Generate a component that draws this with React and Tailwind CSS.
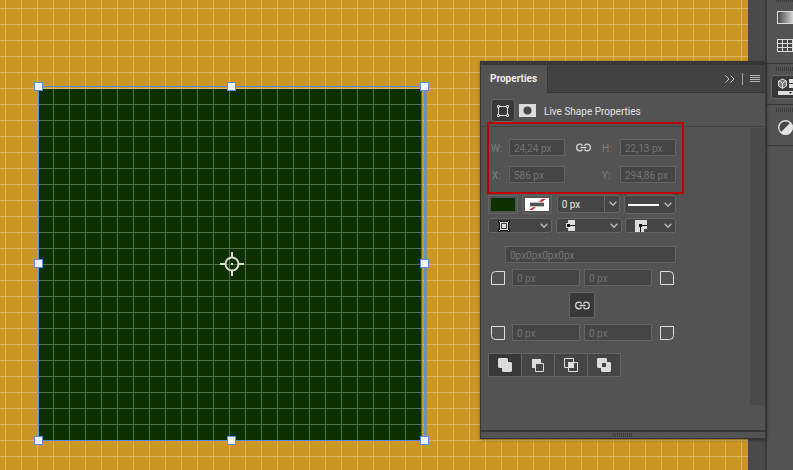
import { useState } from 'react';
import clsx from 'clsx';

function Artboard() {
  const handles = [
    [34, 82], [227, 82], [420, 82],
    [34, 259], [420, 259],
    [34, 436], [227, 436], [420, 436],
  ];

  return (
    <svg className="block w-full h-full" shapeRendering="crispEdges" aria-label="Canvas">
      <defs>
        <pattern id="grid" x="5" y="8" width="16" height="16" patternUnits="userSpaceOnUse">
          <path d="M0 0H16V1H1V16H0Z" fill="#fff" fillOpacity="0.3" />
        </pattern>
      </defs>
      <rect width="100%" height="100%" fill="#cb9722" />
      <rect x="39" y="89" width="383" height="351" fill="#0c3000" />
      <rect width="100%" height="100%" fill="url(#grid)" />

      {/* Selection outline */}
      <g fill="#588ee6">
        <rect x="38" y="86" width="388" height="1" />
        <rect x="38" y="86" width="1" height="355" />
        <rect x="37" y="86" width="1" height="355" fillOpacity="0.6" />
        <rect x="424" y="86" width="2" height="355" />
        <rect x="38" y="440" width="388" height="1" />
      </g>
      <rect x="426" y="91" width="1" height="345" fill="#8f9069" />
      {handles.map(([x, y]) => (
        <rect key={`${x}-${y}`} x={x + 0.5} y={y + 0.5} width="8" height="8" fill="#f5f5f5" stroke="#588ee6" />
      ))}

      {/* Transform origin */}
      <g stroke="#d9ddd5" strokeWidth="2" fill="none" shapeRendering="auto">
        <circle cx="232" cy="264" r="6.5" />
        <path d="M232 252v5M232 271v5M220 264h5M239 264h5" />
        <path d="M231 264h2" />
      </g>
    </svg>
  );
}

function LinkIcon() {
  return (
    <svg width="15" height="9" viewBox="0 0 15 9" fill="none" stroke="#d8d8d8" strokeWidth="1.3">
      <path d="M6.5 2.6A2.6 2.6 0 0 0 4.2 1.2H4a3.3 3.3 0 0 0 0 6.6h.2a2.6 2.6 0 0 0 2.3-1.4M8.5 2.6a2.6 2.6 0 0 1 2.3-1.4h.2a3.3 3.3 0 0 1 0 6.6h-.2a2.6 2.6 0 0 1-2.3-1.4M4.5 4.5h6" />
    </svg>
  );
}

function Chevron() {
  return (
    <svg width="8" height="6" viewBox="0 0 8 6" fill="none" stroke="#bdbdbd" strokeWidth="1.3">
      <path d="M.7 .8L4 4.3L7.3 .8" />
    </svg>
  );
}

function CornerIcon({ d }) {
  return (
    <svg width="14" height="14" viewBox="0 0 14 14" fill="none" stroke="#dcdcdc" className="shrink-0">
      <path d={d} />
    </svg>
  );
}

function Field({ id, label, value, className }) {
  return (
    <input
      id={id}
      aria-label={label}
      defaultValue={value}
      className={clsx('h-[17px] min-w-0 w-full px-1 pt-px bg-[#454545] border border-[#636363] text-[#747474] outline-none', className)}
    />
  );
}

// Select with its drawing and arrow laid over the native control
function IconSelect({ label, options, icon, className }) {
  return (
    <div className={clsx('relative', className)}>
      <select
        aria-label={label}
        className="block appearance-none w-full h-full bg-[#454545] border border-[#656565] rounded-[3px] text-transparent outline-none"
      >
        {options.map((o) => <option key={o} value={o} />)}
      </select>
      <div className="absolute inset-0 flex items-center justify-between pr-1 pointer-events-none">
        {icon}
        <Chevron />
      </div>
    </div>
  );
}

function RadiusRow({ left, right, labels }) {
  return (
    <div className="flex items-center pl-[3px] pr-[2px]">
      <CornerIcon d={left} />
      <div className="flex-1 flex gap-1 ml-[7px] mr-2">
        <Field label={labels[0]} value="0 px" />
        <Field label={labels[1]} value="0 px" />
      </div>
      <CornerIcon d={right} />
    </div>
  );
}

const pathOps = [
  {
    name: 'Combine shapes',
    icon: <path d="M0 1L1 0H9L10 1V4H13L14 5V13L13 14H5L4 13V10H1L0 9Z" fill="#dcdcdc" />,
  },
  {
    name: 'Subtract front shape',
    icon: <><path d="M1 1H10V5H5V10H1Z" fill="#dcdcdc" /><path d="M4.5 5.5H12.5V13.5H4.5Z" fill="#454545" stroke="#dcdcdc" /></>,
  },
  {
    name: 'Intersect shape areas',
    icon: <><path d="M.5 .5H9.5V9.5H.5ZM4.5 4.5H13.5V13.5H4.5Z" stroke="#dcdcdc" /><path d="M4 4H10V10H4Z" fill="#dcdcdc" /></>,
  },
  {
    name: 'Exclude overlapping shapes',
    icon: <path fillRule="evenodd" d="M0 1L1 0H9L10 1V4H13L14 5V13L13 14H5L4 13V10H1L0 9ZM5 5V9H9V5Z" fill="#dcdcdc" />,
  },
];

function PropertiesPanel() {
  const [linked, setLinked] = useState(true);
  const [op, setOp] = useState(0);

  return (
    <section className="absolute top-[61px] right-[26px] w-[287px] border-t-4 border-l border-r-2 border-b border-[#363636] bg-[#535353] shadow-[0_1px_3px_rgba(0,0,0,0.4)]">
      {/* Tab bar */}
      <div className="flex h-7 bg-[#424242]">
        <button className="w-[67px] pl-[9px] pb-[2px] text-left font-bold text-[#ececec] bg-[#535353] border-r border-[#383838]">
          Properties
        </button>
        <div className="flex-1 flex items-center justify-end gap-[7px] pr-[5px] border-b border-[#383838]">
          <button aria-label="Collapse panel">
            <svg width="10" height="8" viewBox="0 0 10 8" fill="none" stroke="#c4c4c4">
              <path d="M.5 .5L4 4L.5 7.5M5.5 .5L9 4L5.5 7.5" />
            </svg>
          </button>
          <span className="w-px h-3 bg-[#a8a8a8]" />
          <button aria-label="Panel menu">
            <svg width="10" height="8" fill="#b5b5b5" shapeRendering="crispEdges">
              <path d="M0 0h10v1H0zM0 2h10v1H0zM0 4h10v1H0zM0 6h10v1H0z" />
            </svg>
          </button>
        </div>
      </div>

      <div className="flex items-center h-[34px] pt-[2px] pl-[10px] border-b border-[#404040]">
        <button aria-label="Live shape" className="flex items-center justify-center w-6 h-[23px] rounded-[3px] bg-[#383838] border border-[#656565]">
          <svg width="12" height="12" viewBox="0 0 12 12" fill="none" stroke="#dcdcdc" className="shrink-0">
            <path d="M1.5 3V9M10.5 3V9M3 1.5H9M3 10.5H9" />
            <path d="M.5 .5h2v2h-2zM9.5 .5h2v2h-2zM.5 9.5h2v2h-2zM9.5 9.5h2v2h-2z" fill="#383838" />
          </svg>
        </button>
        <button aria-label="Mask" className="ml-1">
          <svg width="17" height="13">
            <rect width="17" height="13" fill="#dcdcdc" />
            <circle cx="8.5" cy="6.5" r="4" fill="#484848" />
          </svg>
        </button>
        <h2 className="ml-2 pt-[2px] text-[#e2e2e2]">Live Shape Properties</h2>
      </div>

      <div className="flex h-[303px]">
        <div className="flex-1 pt-3 pl-[7px] pr-[74px]">
          <div className="grid grid-cols-[21px_56px_1fr_18px_56px] gap-y-[10px] items-center text-[#7e7e7e]">
            <label htmlFor="w" className="pl-[3px] pt-px">W:</label>
            <Field id="w" value="24,24 px" />
            <button aria-label="Link width and height" className="justify-self-center"><LinkIcon /></button>
            <label htmlFor="h" className="pt-px">H:</label>
            <Field id="h" value="22,13 px" />
            <label htmlFor="x" className="pl-1 pt-px">X:</label>
            <Field id="x" value="586 px" />
            <span />
            <label htmlFor="y" className="pt-px">Y:</label>
            <Field id="y" value="294,86 px" />
          </div>

          <div className="flex justify-between mt-3 h-[19px]">
            <button aria-label="Fill" className="w-[30px] p-[2px] border border-[#656565]">
              <span className="block h-full bg-[#0c3000]" />
            </button>
            <button aria-label="Stroke" className="w-[30px] p-[2px] border border-[#656565]">
              <svg width="24" height="14" viewBox="0 0 24 14" preserveAspectRatio="none" className="block w-full h-full">
                <rect width="24" height="14" fill="#fff" />
                <path d="M14 4L17 1H21L17 4ZM4 13L8 10H11L7 13Z" fill="#d8201c" />
                <rect x="5" y="5" width="14" height="4" fill="#535353" />
              </svg>
            </button>
            <div className="relative w-[63px] h-[18px]">
              <select aria-label="Stroke width" className="block appearance-none w-full h-full px-1 text-[#e8e8e8] bg-[#454545] border border-[#656565] rounded-[3px] outline-none">
                <option>0 px</option>
              </select>
              <div className="absolute inset-y-0 right-0 flex items-center w-4 pl-1 border-l border-[#656565] pointer-events-none">
                <Chevron />
              </div>
            </div>
            <IconSelect
              label="Stroke type"
              options={['solid', 'dashed', 'dotted']}
              className="w-[52px]"
              icon={<span className="ml-1 w-[31px] h-[2px] bg-white" />}
            />
          </div>

          <div className="flex justify-between mt-1 h-[15px]">
            <IconSelect
              label="Stroke alignment"
              options={['inside', 'center', 'outside']}
              className="w-16"
              icon={
                <svg width="12" height="12" viewBox="0 0 12 12" className="ml-[10px]">
                  <rect x="1.5" y="1.5" width="9" height="9" fill="#dcdcdc" stroke="#111" />
                  <rect x="2" y="2" width="8" height="8" fill="#dcdcdc" />
                  <rect x="3" y="3" width="6" height="6" rx="1" fill="#303030" />
                  <rect x="4" y="4" width="4" height="4" fill="#dcdcdc" />
                  <path d="M0 0h3v2H2v1H0zM9 0h3v3h-2V2H9zM0 9h2v1h1v2H0zM10 9h2v3H9v-2h1z" fill="#111" />
                  <path d="M1 1h1v1H1zM10 1h1v1h-1zM1 10h1v1H1zM10 10h1v1h-1z" fill="#fff" />
                </svg>
              }
            />
            <IconSelect
              label="Stroke caps"
              options={['butt', 'round', 'square']}
              className="w-[66px]"
              icon={
                <svg width="10" height="11" viewBox="0 0 10 11" className="ml-[10px]">
                  <path d="M2 0H9V11H2V8H0V3H2Z" fill="#dcdcdc" />
                  <path d="M1 4H4V5H9V6H4V7H1Z" fill="#111" />
                </svg>
              }
            />
            <IconSelect
              label="Stroke corners"
              options={['miter', 'round', 'bevel']}
              className="w-[51px]"
              icon={
                <svg width="12" height="12" viewBox="0 0 12 12" className="ml-[10px]">
                  <path d="M0 0H12V9H9V12H0Z" fill="#dcdcdc" />
                  <path d="M4 4H7V5H12V6H7V7H6V12H5V7H4Z" fill="#111" />
                </svg>
              }
            />
          </div>

          <div className="mt-[13px] pl-[17px] flex">
            <Field label="Corner radii" value="0px0px0px0px" />
          </div>

          <div className="flex flex-col gap-[6px] mt-[6px]">
            <RadiusRow
              left="M.5 13.5V4.5Q.5 .5 4.5 .5H13.5V13.5Z"
              right="M.5 13.5V.5H9.5Q13.5 .5 13.5 4.5V13.5Z"
              labels={['Top left radius', 'Top right radius']}
            />
            <button
              aria-label="Link radii"
              aria-pressed={linked}
              onClick={() => setLinked(!linked)}
              className={clsx('self-center flex items-center justify-center w-[26px] h-[26px] rounded-[2px] border border-[#656565]', linked ? 'bg-[#383838]' : 'bg-[#454545]')}
            >
              <LinkIcon />
            </button>
            <RadiusRow
              left="M.5 .5H13.5V13.5H4.5Q.5 13.5 .5 9.5Z"
              right="M.5 .5H13.5V9.5Q13.5 13.5 9.5 13.5H.5Z"
              labels={['Bottom left radius', 'Bottom right radius']}
            />
          </div>

          <div className="inline-flex mt-3 border-l border-[#656565]">
            {pathOps.map((p, i) => (
              <button
                key={p.name}
                aria-label={p.name}
                onClick={() => setOp(i)}
                className={clsx('flex items-center justify-center w-[33px] h-6 border-y border-r border-[#656565]', i === op ? 'bg-[#383838]' : 'bg-[#454545]')}
              >
                <svg width="14" height="14" viewBox="0 0 14 14" fill="none">{p.icon}</svg>
              </button>
            ))}
          </div>
        </div>
        <div className="w-[15px] h-[277px] mt-px bg-[#4a4a4a]" />
      </div>

      <div className="flex justify-center items-center h-2 border-t-2 border-[#383838]">
        <Grip />
      </div>

      {/* Highlight frame */}
      <div className="absolute left-[6px] top-[57px] w-[197px] h-[72px] border-2 border-[#c00000] pointer-events-none" />
    </section>
  );
}

function Grip() {
  return <span className="block w-5 h-1 bg-[repeating-linear-gradient(90deg,#3d3d3d_0_1px,transparent_1px_2px)]" />;
}

function Dock() {
  return (
    <aside className="w-7 shrink-0 overflow-hidden bg-[#535353] border-l-2 border-[#3a3a3a]">
      <div className="flex flex-col h-16 pl-[9px] border-b border-[#383838]">
        <div className="h-[11px] flex items-start -mt-[2px]"><Grip /></div>
        <button aria-label="Gradient" className="mt-[2px]">
          <svg width="20" height="13">
            <defs>
              <linearGradient id="ramp">
                <stop offset="0" stopColor="#444" />
                <stop offset="1" stopColor="#eee" />
              </linearGradient>
            </defs>
            <rect x="1.5" y=".5" width="18" height="12" fill="url(#ramp)" stroke="#dcdcdc" />
          </svg>
        </button>
        <button aria-label="Swatches" className="mt-[15px]">
          <svg width="22" height="13" shapeRendering="crispEdges">
            <rect x="1" width="21" height="13" fill="#dcdcdc" />
            <path d="M2 1h4v3H2zM7 1h4v3H7zM12 1h4v3h-4zM2 5h4v3H2zM7 5h4v3H7zM12 5h4v3h-4zM2 9h4v3H2zM7 9h4v3H7zM12 9h4v3h-4z" fill="#444" />
          </svg>
        </button>
      </div>
      <div className="h-[41px] pt-[3px] pl-1 border-b border-[#383838]">
        <div className="pl-[5px]"><Grip /></div>
        <button aria-label="Properties" className="block w-9 h-6 mt-1 pl-[6px] rounded-[3px] bg-[#383838] border border-[#656565]">
          <svg width="28" height="18" viewBox="0 0 28 18">
            <path d="M4.5 1L8.5 3V8L4.5 10.5L.5 8V3Z" fill="#777" stroke="#dcdcdc" />
            <path d="M1 3L4.5 5L8 3M4.5 5V10" fill="none" stroke="#dcdcdc" />
            <path d="M11 1H28V5H11ZM11 6H28V10H11ZM0 13H28V17H0Z" fill="#dcdcdc" />
            <path d="M11 14H14L12.5 16Z" fill="#333" />
          </svg>
        </button>
      </div>
      <div className="h-[41px] pt-[3px] pl-[9px] border-b border-[#383838]">
        <Grip />
        <button aria-label="Adjustments" className="block mt-2 ml-[2px]">
          <svg width="15" height="15" viewBox="0 0 15 15">
            <circle cx="7.5" cy="7.5" r="6.8" fill="#484848" stroke="#dcdcdc" strokeWidth="1.4" />
            <path d="M12.7 2.3A7.3 7.3 0 0 1 2.3 12.7Z" fill="#e4e4e4" />
          </svg>
        </button>
      </div>
    </aside>
  );
}

export default function App() {
  return (
    <div className="relative flex h-screen overflow-hidden bg-[#4a4a4a] font-[Roboto,sans-serif] text-[10px] leading-[15px]">
      <main className="flex-1 min-w-0">
        <Artboard />
      </main>
      <div className="w-[17px] shrink-0 bg-[#4a4a4a]" />
      <Dock />
      <PropertiesPanel />
    </div>
  );
}
